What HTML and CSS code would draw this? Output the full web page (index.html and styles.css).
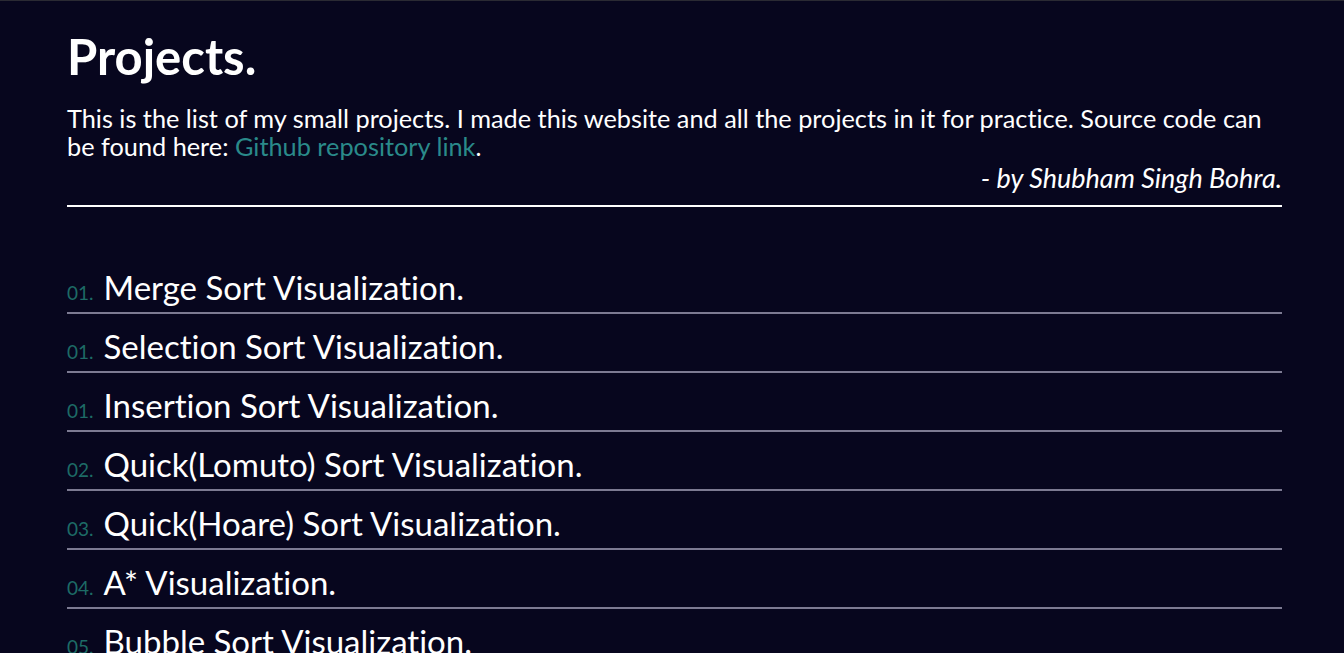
FILE: index.html
```html
<!DOCTYPE html>
<html lang="en">
<head>
<meta charset="utf-8">
<title>Projects</title>
<link rel="stylesheet" href="styles.css">
</head>
<body>
<main class="page">
  <header class="intro">
    <h1 class="title">Projects.</h1>
    <p class="lead">This is the list of my small projects. I made this website and all the projects in it for practice. Source code can be found here: <a class="link" href="#">Github repository link</a>.</p>
    <p class="sign">- by Shubham Singh Bohra.</p>
  </header>
  <ul class="list">
    <li class="item"><span class="num">01.</span><span class="name">Merge Sort Visualization.</span></li>
    <li class="item"><span class="num">01.</span><span class="name">Selection Sort Visualization.</span></li>
    <li class="item"><span class="num">01.</span><span class="name">Insertion Sort Visualization.</span></li>
    <li class="item"><span class="num">02.</span><span class="name">Quick(Lomuto) Sort Visualization.</span></li>
    <li class="item"><span class="num">03.</span><span class="name">Quick(Hoare) Sort Visualization.</span></li>
    <li class="item"><span class="num">04.</span><span class="name">A* Visualization.</span></li>
    <li class="item"><span class="num">05.</span><span class="name">Bubble Sort Visualization.</span></li>
  </ul>
</main>
</body>
</html>
```

FILE: styles.css
```css
html, body {
  margin: 0;
  padding: 0;
  background: #07061e;
}
body {
  border-top: 1px solid #2a2a33;
  font-family: "Lato", "Liberation Sans", sans-serif;
  font-variant-ligatures: none;
  color: #ffffff;
  overflow: hidden;
}
.page {
  width: 1215px;
  margin-left: 67px;
  padding-top: 25px;
}
.title {
  margin: 0;
  font-size: 49px;
  font-weight: 700;
  line-height: 60px;
}
.lead {
  margin: 18px 0 0;
  font-size: 25.3px;
  line-height: 28px;
  font-weight: 400;
}
.link {
  color: #2a8a8a;
  text-decoration: none;
}
.sign {
  margin: 3px 0 0;
  text-align: right;
  font-style: italic;
  font-size: 27px;
  line-height: 30px;
  padding-bottom: 12px;
  border-bottom: 2px solid #ffffff;
}
.list {
  list-style: none;
  margin: 0;
  padding: 50px 0 0;
}
.item {
  display: flex;
  align-items: baseline;
  gap: 10px;
  height: 57px;
  border-bottom: 2px solid #7c7a92;
  box-sizing: border-box;
  padding-top: 10px;
}
.item + .item { margin-top: 2px; }
.num {
  color: #1d6b66;
  font-size: 19px;
}
.name {
  font-size: 33px;
  line-height: 40px;
}
```
